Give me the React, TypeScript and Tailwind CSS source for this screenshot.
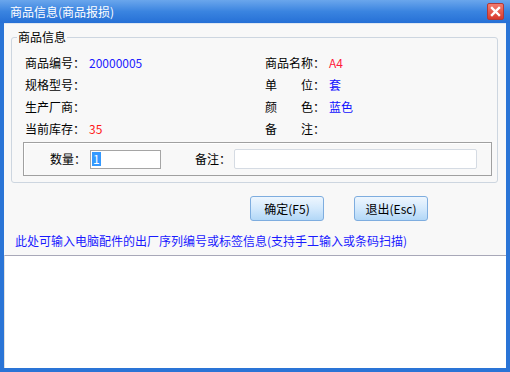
const font = { fontFamily: '"Noto Sans CJK SC", "Liberation Sans", sans-serif' };

const Field = ({ label, value, color }: { label: React.ReactNode; value?: string; color?: string }) => (
  <div className="flex items-center h-[22px]">
    <span className="w-[64px] text-black">{label}</span>
    <span className={color}>{value}</span>
  </div>
);

const Spread = ({ a, b }: { a: string; b: string }) => (
  <span className="flex w-[60px] justify-between">
    <span>{a}</span>
    <span>{b}：</span>
  </span>
);

export default function App() {
  return (
    <div
      className="w-[510px] h-[372px] bg-[#2a74d6] flex flex-col text-[12px] leading-none select-none"
      style={font}
    >
      {/* title bar */}
      <div className="h-[23px] flex items-center justify-between pl-[10px] pr-[6px] bg-gradient-to-b from-[#6aa6ec] via-[#3a84e0] to-[#2670d6]">
        <span className="text-white text-[12px]">商品信息(商品报损)</span>
        <div className="w-[17px] h-[17px] rounded-[2px] border border-[#b03a3a] bg-gradient-to-b from-[#f27a6e] to-[#d8382c] flex items-center justify-center">
          <svg width="11" height="11" viewBox="0 0 11 11">
            <path d="M2 2 L9 9 M9 2 L2 9" stroke="white" strokeWidth="2.4" strokeLinecap="square" />
          </svg>
        </div>
      </div>

      {/* body */}
      <div className="flex-1 mx-[4px] mb-[4px] bg-[#f8f8f8] flex flex-col border-t border-[#dfe7f1]">
        {/* group box */}
        <div className="relative mt-[13px] ml-[7px] mr-[8px] h-[146px] border border-[#cdd6e0] rounded-[3px] pt-[14px] pl-[11px] pr-[5px]">
          <span className="absolute left-[5px] -top-[7px] bg-[#f8f8f8] px-[1px] text-black">商品信息</span>
          <div className="grid grid-cols-[240px_1fr] pl-[2px]">
            <div className="flex flex-col">
              <Field label="商品编号：" value="20000005" color="text-[#2020ff]" />
              <Field label="规格型号：" />
              <Field label="生产厂商：" />
              <Field label="当前库存：" value="35" color="text-[#ff1a1a]" />
            </div>
            <div className="flex flex-col">
              <Field label="商品名称：" value="A4" color="text-[#ff1a3a]" />
              <Field label={<Spread a="单" b="位" />} value="套" color="text-[#1010ff]" />
              <Field label={<Spread a="颜" b="色" />} value="蓝色" color="text-[#1010ff]" />
              <Field label={<Spread a="备" b="注" />} />
            </div>
          </div>
          {/* inner box */}
          <div className="mt-[2px] h-[34px] border border-[#a0a0a0] shadow-[inset_1px_1px_0_#ffffff] flex items-center pl-[26px] pr-[14px]">
            <span className="text-black">数量：</span>
            <div className="ml-[4px] w-[71px] h-[19px] bg-white border border-[#a5a5a5] flex items-center pl-[1px]">
              <span className="bg-[#3399ff] text-white px-[1px] leading-[14px]">1</span>
            </div>
            <span className="ml-[34px] text-black">备注：</span>
            <div className="ml-[3px] flex-1 h-[20px] bg-white border border-[#d5dbe3] rounded-[2px]" />
          </div>
        </div>

        {/* buttons */}
        <div className="flex mt-[13px] pl-[246px] gap-[30px]">
          <button className="w-[74px] h-[25px] rounded-[3px] border border-[#7eaddf] bg-gradient-to-b from-[#eef6fe] via-[#d3e9fc] to-[#b2d7f7] text-black text-[12px]">
            确定(F5)
          </button>
          <button className="w-[74px] h-[25px] rounded-[3px] border border-[#7eaddf] bg-gradient-to-b from-[#eef6fe] via-[#d3e9fc] to-[#b2d7f7] text-black text-[12px]">
            退出(Esc)
          </button>
        </div>

        <div className="mt-[14px] pl-[11px] text-[#1a1aff]">
          此处可输入电脑配件的出厂序列编号或标签信息(支持手工输入或条码扫描)
        </div>

        <div className="mt-[8px] flex-1 bg-white border-t border-[#a8a8b8] border-l border-l-[#e0e0e0]" />
      </div>
    </div>
  );
}
